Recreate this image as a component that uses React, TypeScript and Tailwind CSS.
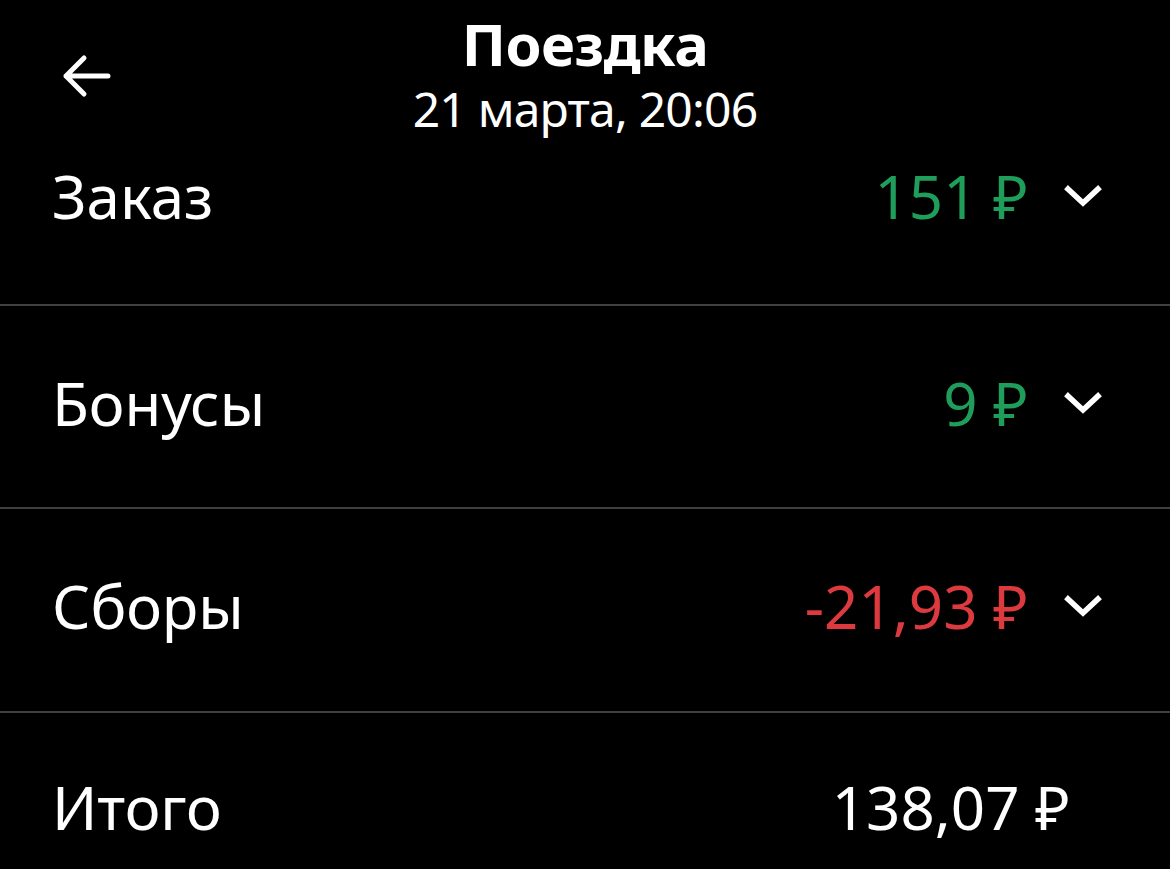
import React from 'react';

type Line = {
    label: string;
    amount: string;
    tone: 'plus' | 'minus' | 'plain';
    expandable: boolean;
};

const lines: Line[] = [
    { label: 'Заказ', amount: '151 ₽', tone: 'plus', expandable: true },
    { label: 'Бонусы', amount: '9 ₽', tone: 'plus', expandable: true },
    { label: 'Сборы', amount: '-21,93 ₽', tone: 'minus', expandable: true },
];

const toneClass = {
    plus: 'text-[#1f9d5b]',
    minus: 'text-[#dd3a40]',
    plain: 'text-white',
};

const Chevron = () => (
    <svg width="38" height="24" viewBox="0 0 38 24" fill="none" className="shrink-0">
        <path d="M4 5l15 14L34 5" stroke="white" strokeWidth="5.5" strokeLinecap="square" />
    </svg>
);

const BackArrow = () => (
    <svg width="52" height="52" viewBox="0 0 52 52" fill="none">
        <path d="M48 26H6M24 8L6 26l18 18" stroke="white" strokeWidth="5" strokeLinecap="round" strokeLinejoin="round" />
    </svg>
);

const Row: React.FC<{ line: Line; className: string }> = ({ line, className }) => (
    <div className={`flex items-center justify-between pl-[52px] ${className}`}>
        <span className="text-[60px] leading-none text-white">{line.label}</span>
        <div className="flex items-center gap-[36px]">
            <span className={`text-[60px] leading-none ${toneClass[line.tone]}`}>{line.amount}</span>
            {line.expandable && <Chevron />}
        </div>
    </div>
);

export default function App() {
    return (
        <div className="min-h-screen bg-black text-white" style={{ fontFamily: '"Noto Sans", "Open Sans", sans-serif' }}>
            <header className="relative flex h-[150px] flex-col items-center pt-[14px]">
                <button className="absolute left-[60px] top-[50px]">
                    <BackArrow />
                </button>
                <h1 className="text-[58px] font-bold leading-[60px] tracking-[-0.5px]">Поездка</h1>
                <p className="mt-[7px] text-[48px] leading-[56px] tracking-[-0.8px]">21 марта, 20:06</p>
            </header>

            <Row line={lines[0]} className="h-[154px] pb-[62px] pr-[68px]" />
            <div className="h-[2px] bg-[#404040]" />
            <Row line={lines[1]} className="h-[201px] pb-[8px] pr-[68px]" />
            <div className="h-[2px] bg-[#404040]" />
            <Row line={lines[2]} className="h-[202px] pb-[8px] pr-[68px]" />
            <div className="h-[2px] bg-[#404040]" />
            <Row
                line={{ label: 'Итого', amount: '138,07 ₽', tone: 'plain', expandable: false }}
                className="h-[196px] pb-[8px] pr-[100px]"
            />
        </div>
    );
}
